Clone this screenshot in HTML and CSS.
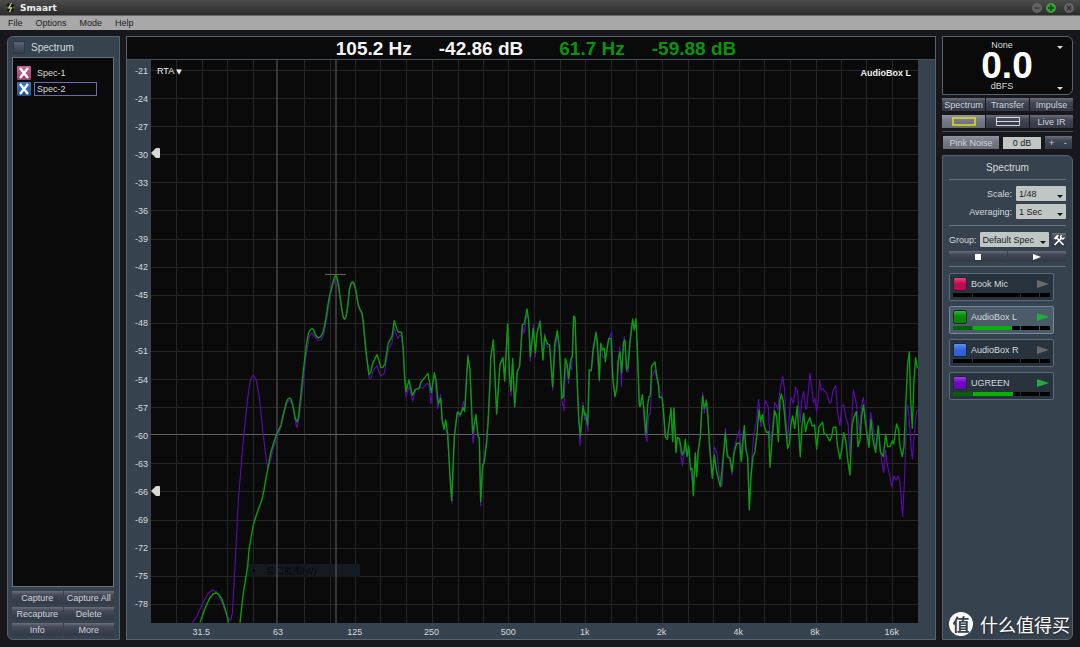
FILE: index.html
```html
<!DOCTYPE html>
<html lang="en">
<head>
<meta charset="utf-8">
<title>Smaart</title>
<link rel="stylesheet" href="styles.css">
</head>
<body>
<div class="app">
  <header class="titlebar">
    <svg class="logo" viewBox="0 0 12 12" aria-hidden="true"><circle cx="6" cy="6" r="5" fill="#111" stroke="#2b3a20"/><path d="M7 1 4 6.500h3L5 11" fill="none" stroke="#d8d8c8" stroke-width="1.300"/><path d="M1.500 5v2M3 4.500v3M9 4.500v3M10.500 5v2" stroke="#5d8a34" stroke-width=".8"/></svg>
    <h1 class="app-name">Smaart</h1>
    <div class="window-controls">
      <button class="win-btn" aria-label="Minimize"><svg viewBox="0 0 10 10"><circle cx="5" cy="5" r="5" fill="#636363"/><path d="M2.500 5h5" stroke="#2f2f2f" stroke-width="1.200"/></svg></button>
      <button class="win-btn" aria-label="Maximize"><svg viewBox="0 0 10 10"><circle cx="5" cy="5" r="5" fill="#35a32c"/><path d="M2 5h6M5 2v6" stroke="#0c3a0a" stroke-width="1.400"/></svg></button>
      <button class="win-btn win-close" aria-label="Close"><svg viewBox="0 0 10 10"><circle cx="5" cy="5" r="5" fill="#636363"/><path d="m3 3 4 4M7 3 3 7" stroke="#2a2a2a" stroke-width="1.300"/></svg></button>
    </div>
  </header>
  <nav class="menubar">
    <button class="menu-item">File</button>
    <button class="menu-item">Options</button>
    <button class="menu-item">Mode</button>
    <button class="menu-item">Help</button>
  </nav>

  <main class="workspace">
    <aside class="panel data-panel">
      <div class="data-head">
        <button class="fold" aria-label="Collapse"></button>
        <h2 class="panel-title">Spectrum</h2>
      </div>
      <ul class="captures">
        <li class="capture">
          <button class="swatch-x pink" aria-label="Hide Spec-1"><svg viewBox="0 0 14 14"><path d="m3 2 8 10M11 2 3 12" stroke="#fff" stroke-width="2.400"/></svg></button>
          <input class="capture-name" aria-label="First capture name" value="Spec-1">
        </li>
        <li class="capture">
          <button class="swatch-x blue" aria-label="Hide Spec-2"><svg viewBox="0 0 14 14"><path d="m3 2 8 10M11 2 3 12" stroke="#fff" stroke-width="2.400"/></svg></button>
          <input class="capture-name selected" aria-label="Second capture name" value="Spec-2">
        </li>
      </ul>
      <div class="data-actions">
        <button class="btn">Capture</button><button class="btn">Capture All</button>
        <button class="btn">Recapture</button><button class="btn">Delete</button>
        <button class="btn">Info</button><button class="btn">More</button>
      </div>
    </aside>

    <section class="graph">
      <div class="readout">
        <span>105.2 Hz</span><span class="gap-m">-42.86 dB</span><span class="locked gap-l">61.7 Hz</span><span class="locked gap-m">-59.88 dB</span>
      </div>
      <div class="axis-y">
        <span>-21</span><span>-24</span><span>-27</span><span>-30</span><span>-33</span><span>-36</span><span>-39</span><span>-42</span><span>-45</span><span>-48</span><span>-51</span><span>-54</span><span>-57</span><span>-60</span><span>-63</span><span>-66</span><span>-69</span><span>-72</span><span>-75</span><span>-78</span>
      </div>
      <div class="plot">
        <svg class="chart" viewBox="151 60 767 563" preserveAspectRatio="none" role="img" aria-label="RTA spectrum">
          <path class="grid" d="M151 70.500h767M151 98.500h767M151 126.500h767M151 154.500h767M151 182.500h767M151 210.500h767M151 239.500h767M151 267.500h767M151 295.500h767M151 323.500h767M151 351.500h767M151 379.500h767M151 407.500h767M151 463.500h767M151 491.500h767M151 520.500h767M151 548.500h767M151 576.500h767M151 604.500h767"/>
          <path class="grid" d="M176.500 60v563M202.500 60v563M227.500 60v563M253.500 60v563M304.500 60v563M330.500 60v563M355.500 60v563M380.500 60v563M406.500 60v563M432.500 60v563M458.500 60v563M483.500 60v563M508.500 60v563M534.500 60v563M560.500 60v563M585.500 60v563M611.500 60v563M636.500 60v563M662.500 60v563M688.500 60v563M713.500 60v563M739.500 60v563M764.500 60v563M790.500 60v563M816.500 60v563M841.500 60v563M866.500 60v563M892.500 60v563"/>
          <rect x="248" y="564" width="112" height="13" fill="#141b20"/>
          <text class="ghost" x="266" y="574">窗口截图(W)</text><circle cx="254" cy="570.500" r="1.500" fill="#06090b"/>
          <path class="cursor" d="M277 60v563M336 60v563M151 434.500h767M325 274.500h21"/>
          <g class="trace purple">
            <polyline transform="translate(180 260) scale(.3333)" points="37,1088 50,1070 68,1030 85,1000 98,990 110,997 125,1025 140,1065 152,1082 157,1060 165,920 175,720 190,540 203,415 211,360 219,345 228,358 238,410 248,510 260,610 265,625 272,600 280,565 290,535 303,502 312,462 320,432 328,420 337,432 345,480 351,503 357,475 367,395 377,295 388,230 396,218 404,230 413,241 424,240 431,225 440,180 450,110 458,80 467,58 475,80 483,130 490,172 495,178 502,150 508,92 514,72 518,68 525,82 535,140 546,165 553,230 560,300 568,355 573,355 580,330 591,318 602,348 613,340 625,270 636,248 643,205 653,235 660,225"/>
            <polyline transform="translate(400 290) scale(.3333)" points="0,135 5,140 10,190 18,320 27,290 38,333 47,300 60,290 68,295 80,280 87,285 93,342 100,270 104,260 113,357 122,313 127,390 135,415 143,440 150,560 156,640 163,440 172,370 181,380 190,335 195,355 200,250 204,193 210,240 219,460 228,380 234,440 238,450 242,648 248,530 258,460 264,400 270,280 272,208 280,153 290,370 300,225 309,205 314,270 323,105 328,250 333,317 338,210 344,350 352,245 359,228 367,110 372,130 381,70 386,95 391,213 400,105 406,200 411,130 420,90 429,205 434,130 441,170 449,172 458,300 464,200 472,130 478,180 486,330 492,362 496,240 499,220 506,280 510,220 515,240 521,80 525,85 530,250 536,390 540,467 549,338 554,390 557,375 564,425 568,245 574,245 588,123 598,275 602,165 608,200 616,205 626,150 635,125 640,270 645,320 651,290 659,170 664,290 669,170 673,140 680,245 685,245 690,165 698,95 703,120 708,90 713,200 718,345 720,350"/>
            <polyline transform="translate(640 290) scale(.3333)" points="0,350 8,335 15,430 21,455 26,375 31,370 36,260 44,240 50,265 60,305 66,310 71,360 76,440 82,448 85,425 93,358 98,450 102,352 108,485 112,442 118,455 127,528 136,470 140,500 146,475 152,535 160,605 166,487 170,545 175,480 181,440 188,308 193,370 199,328 204,380 212,500 217,555 223,470 232,495 238,560 246,590 251,500 256,415 262,490 270,508 276,555 282,480 290,445 299,417 304,500 309,430 313,420 318,480 323,505 328,650 335,510 342,430 350,390 356,328 363,410 370,385 376,332 385,352 390,455 397,420 404,338 409,345 414,360 420,300 428,258 434,300 438,390 443,455 452,320 460,340 467,292 472,300 478,370 481,398 485,330 491,304 497,357 500,357 510,250 515,290 520,338 525,325 530,365 535,330 539,270 543,300 548,296 560,310 569,340 574,335 578,305 587,287 593,370 600,407 605,350 611,343 617,380 624,400 630,500 635,400 640,300 648,335 655,390 659,430 664,350 670,323 677,380 683,435 687,450 692,367 700,410 707,480 713,420 718,440 722,490 731,548 737,480 743,530 750,560 755,590 762,558 769,570 775,558 780,580 788,680 794,560 800,360 804,345 808,390 813,470 817,507 824,420 828,375 833,358"/>
          </g>
          <g class="trace green">
            <polyline transform="translate(180 260) scale(.3333)" points="60,1088 75,1045 90,1013 99,1002 108,999 116,1003 125,1016 136,1048 146,1088"/>
            <polyline transform="translate(180 260) scale(.3333)" points="180,1088 190,1000 203,920 207,870 213,835 219,800 228,768 238,740 245,722 252,690 259,650 265,618 272,580 280,552 290,523 303,495 307,475 312,455 318,430 323,418 328,414 333,418 338,433 346,475 351,486 355,475 359,440 365,380 375,290 380,250 385,222 390,210 396,206 401,209 405,222 410,230 415,234 421,231 427,222 432,205 437,180 447,115 458,70 464,52 467,46 471,52 475,70 483,130 488,165 492,176 495,177 499,168 503,140 508,90 513,70 518,65 522,69 527,88 535,135 540,148 546,158 550,185 553,220 560,290 567,344 572,338 578,310 591,284 597,300 602,322 608,323 615,312 620,280 625,250 636,230 643,182 652,212 657,217 660,215"/>
            <polyline transform="translate(400 290) scale(.3333)" points="0,125 5,128 10,180 14,265 18,305 27,270 37,316 46,298 58,296 62,278 84,250 94,308 103,248 108,270 115,342 122,325 127,395 132,418 137,390 143,430 150,560 155,632 163,440 172,366 181,374 190,352 194,365 200,260 204,200 210,240 218,430 228,374 234,438 238,445 242,635 248,525 252,520 260,460 264,400 270,280 272,205 280,150 290,372 300,222 309,203 314,273 323,102 328,250 333,303 338,205 344,350 352,245 359,228 367,105 373,102 381,57 386,90 391,200 400,115 406,188 411,130 420,95 429,210 434,138 441,160 449,165 458,290 464,165 472,122 478,170 486,326 490,320 496,205 502,225 506,265 513,205 517,200 521,78 525,82 530,230 536,380 541,438 549,348 554,375 557,370 563,405 568,240 574,240 579,180 588,128 592,155 598,270 602,160 608,180 613,175 616,215 626,145 633,145 638,260 645,320 651,290 654,215 660,185 665,248 671,155 675,150 680,240 684,230 690,155 698,87 703,120 708,86 713,200 718,345 720,350"/>
            <polyline transform="translate(640 290) scale(.3333)" points="0,350 3,335 7,314 12,360 18,435 23,345 27,320 31,318 35,228 45,216 50,255 55,280 58,322 66,322 70,360 76,440 82,448 85,420 93,354 98,455 102,355 108,488 112,442 118,445 127,495 132,485 136,448 141,500 146,468 152,540 156,535 160,617 166,490 170,560 175,480 181,440 186,345 188,318 193,355 199,332 204,380 208,460 212,510 217,565 223,495 229,540 241,590 248,520 256,430 262,500 270,505 276,545 282,490 290,460 299,460 304,515 313,407 318,480 323,500 328,660 333,560 339,500 345,485 351,430 357,360 362,395 367,374 373,410 380,428 386,425 390,532 396,450 404,362 410,380 415,455 420,330 424,312 430,335 436,400 443,475 449,460 452,410 458,378 464,415 472,348 477,440 481,500 486,410 491,370 497,425 502,400 510,383 516,408 524,405 530,477 537,410 548,397 552,430 560,435 569,453 575,440 580,412 588,412 592,465 600,507 606,475 611,428 617,450 624,515 630,555 636,410 642,380 649,365 654,470 660,450 665,380 670,345 676,395 682,440 687,472 693,388 699,450 707,487 715,408 721,485 730,500 737,433 743,470 750,470 757,452 761,462 770,402 776,420 780,470 787,500 792,470 797,350 803,225 808,185 812,330 817,415 822,270 827,203 832,235"/>
          </g>
        </svg>
        <button class="plot-mode">RTA <span class="tri">▼</span></button>
        <span class="plot-source">AudioBox L</span>
        <button class="handle handle-high" aria-label="Upper threshold"><svg viewBox="0 0 10 10"><path d="M0 5 5 0h3q1 0 1 1v8q0 1-1 1H5z" fill="#d8d8d8"/></svg></button>
        <button class="handle handle-low" aria-label="Lower threshold"><svg viewBox="0 0 10 10"><path d="M0 5 5 0h3q1 0 1 1v8q0 1-1 1H5z" fill="#d8d8d8"/></svg></button>
      </div>
      <div class="axis-x">
        <span>31.5</span><span>63</span><span>125</span><span>250</span><span>500</span><span>1k</span><span>2k</span><span>4k</span><span>8k</span><span>16k</span>
      </div>
    </section>

    <aside class="side">
      <div class="meter">
        <button class="meter-label">None</button>
        <strong class="meter-value">0.0</strong>
        <button class="meter-label">dBFS</button>
        <i class="arrow arrow-top"></i><i class="arrow arrow-bottom"></i>
      </div>
      <div class="modes">
        <button class="btn">Spectrum</button><button class="btn">Transfer</button><button class="btn">Impulse</button>
      </div>
      <div class="modes views">
        <button class="btn active" aria-label="Single view"><svg class="view-icon" viewBox="0 0 24 9"><path d="M1 1h22v7H1z" fill="none" stroke="#e2de1c" stroke-width="1.500"/></svg></button>
        <button class="btn" aria-label="Split view"><svg class="view-icon" viewBox="0 0 24 9"><path d="M.5.500h23v8H.5zM.5 4.500h23" fill="none" stroke="#d5d9dc"/></svg></button>
        <button class="btn">Live IR</button>
      </div>
      <div class="generator">
        <button class="btn active noise">Pink Noise</button>
        <input class="level" aria-label="Generator level" value="0 dB">
        <div class="stepper"><button class="btn">+</button><button class="btn">-</button></div>
      </div>

      <div class="panel control">
        <h2 class="panel-title control-title">Spectrum</h2>
        <div class="settings">
          <label for="scale">Scale:</label>
          <span class="pick"><select id="scale"><option>1/48</option></select></span>
          <label for="avg">Averaging:</label>
          <span class="pick"><select id="avg"><option>1 Sec</option></select></span>
        </div>
        <div class="group">
          <div class="group-row">
            <label for="group">Group:</label>
            <span class="pick"><select id="group"><option>Default Spec</option></select></span>
            <button class="btn tools" aria-label="Group settings"><svg viewBox="0 0 12 12"><path d="m3 3 7.500 8M9 3.500l-7.500 7.500" stroke="#fff" stroke-width="1.700"/><path d="M.5 4.500 4 1l2 .5L3 5.500z" fill="#fff"/><path d="M9 1 7.500 2.500l.5 2 2 .5L11.500 3.500" fill="none" stroke="#fff" stroke-width="1.300"/></svg></button>
          </div>
          <div class="transport">
            <button class="btn" aria-label="Stop all"><svg viewBox="0 0 10 6"><path d="M2 0h6v6H2z" fill="#fff"/></svg></button>
            <button class="btn" aria-label="Run all"><svg viewBox="0 0 10 6"><path d="M1 0 9 3 1 6z" fill="#fff"/></svg></button>
          </div>
        </div>
        <ul class="inputs">
          <li class="input-card"><button class="swatch red" aria-label="Book Mic color"></button><span class="input-name">Book Mic</span><button class="run" aria-label="Run Book Mic"><svg viewBox="0 0 12 8"><path d="M0 0 12 4 0 8z" fill="#6c6968"/></svg></button><div class="level-bar"><i></i><i></i><i></i><i></i></div></li>
          <li class="input-card current"><button class="swatch grn" aria-label="AudioBox L color"></button><span class="input-name">AudioBox L</span><button class="run" aria-label="Stop AudioBox L"><svg viewBox="0 0 12 8"><path d="M0 0 12 4 0 8z" fill="#1fae3c"/></svg></button><div class="level-bar"><i class="low"></i><i><b class="fill" style="width:83%"></b></i><i></i><i></i></div></li>
          <li class="input-card"><button class="swatch blu" aria-label="AudioBox R color"></button><span class="input-name">AudioBox R</span><button class="run" aria-label="Run AudioBox R"><svg viewBox="0 0 12 8"><path d="M0 0 12 4 0 8z" fill="#6c6968"/></svg></button><div class="level-bar"><i></i><i></i><i></i><i></i></div></li>
          <li class="input-card"><button class="swatch pur" aria-label="UGREEN color"></button><span class="input-name">UGREEN</span><button class="run" aria-label="Stop UGREEN"><svg viewBox="0 0 12 8"><path d="M0 0 12 4 0 8z" fill="#1fae3c"/></svg></button><div class="level-bar"><i class="low"></i><i><b class="fill" style="width:86%"></b></i><i></i><i></i></div></li>
        </ul>
      </div>
    </aside>
  </main>
  <div class="watermark"><span class="badge">值</span>什么值得买</div>
</div>
</body>
</html>
```
FILE: styles.css
```css
* { box-sizing: border-box; }
body {
  margin: 0;
  background: #17171c;
  color: #d5dade;
  font: 9px/10px "Liberation Sans", "Noto Sans CJK SC", sans-serif;
}
h1, h2, ul { margin: 0; padding: 0; list-style: none; }
button, input, select {
  margin: 0;
  padding: 0;
  border: 0;
  border-radius: 0;
  background: none;
  color: inherit;
  font: inherit;
}
svg { display: block; }

.app { position: relative; display: flex; flex-direction: column; min-height: 100vh; }

.titlebar {
  display: flex;
  align-items: center;
  gap: 4px;
  height: 16px;
  padding: 0 6px 0 5px;
  background: linear-gradient(#4c4c4c, #2b2b2b);
  border-bottom: 1px solid #6c6c6c;
}
.logo { width: 11px; height: 11px; }
.app-name { flex: 1; color: #eee; font: bold 9px/12px "DejaVu Sans", sans-serif; }
.window-controls { display: flex; gap: 4px; }
.win-btn { width: 10px; height: 10px; }
.win-close { margin-left: 4px; }

.menubar {
  display: flex;
  gap: 13px;
  height: 14px;
  padding-left: 8px;
  background: #a8a8a8;
  color: #1c1c1c;
}
.menu-item { line-height: 12px; }

.workspace {
  flex: 1;
  display: grid;
  grid-template-columns: 113px minmax(0, 1fr) 131px;
  gap: 6px;
  padding: 6px 7px 7px;
}
.panel { background: #36424e; border: 1px solid #536472; }
.panel-title { font-size: 10px; font-weight: normal; line-height: 12px; }

.btn {
  display: flex;
  align-items: center;
  justify-content: center;
  background: linear-gradient(#6b6f7c, #454a58 30%, #3c4150 55%, #343948);
  color: #d0d4da;
  white-space: nowrap;
  line-height: 10px;
}
.btn.active { background: linear-gradient(#9093a0, #777a86 40%, #686c79); }

/* captured data list */
.data-panel {
  display: flex;
  flex-direction: column;
  padding: 2px 5px 3px 4px;
  border-radius: 6px 0 0 6px;
}
.data-head { display: flex; align-items: center; gap: 6px; height: 18px; padding: 0 0 1px 1px; }
.fold { width: 12px; height: 13px; background: linear-gradient(#5a6274, #363d4c); border: 1px solid #2f3743; }
.captures {
  flex: 1;
  display: flex;
  flex-direction: column;
  gap: 2px;
  padding: 8px 16px 0 4px;
  background: #0a0a0a;
  border: 1px solid #66747f;
}
.capture { display: flex; align-items: center; gap: 3px; }
.swatch-x { flex: none; width: 14px; height: 14px; border-radius: 1px; }
.pink { background: linear-gradient(#c8649c, #96416e); }
.blue { background: linear-gradient(#3f7cba, #235088); }
.capture-name { flex: 1; min-width: 0; height: 14px; padding-left: 2px; border: 1px solid transparent; }
.selected { border-color: #6d69b8; }
.data-actions { display: grid; grid-template-columns: 1fr 1fr; gap: 3px 1px; padding-top: 4px; }
.data-actions .btn { height: 13px; }

/* graph */
.graph {
  display: grid;
  grid-template-columns: 24px minmax(0, 1fr) 17px;
  grid-template-rows: 23px minmax(0, 1fr) 16px;
  background: #36424e;
  border: 1px solid #536472;
}
.readout {
  grid-column: 1 / -1;
  display: flex;
  justify-content: center;
  padding-left: 10px;
  background: #0a0a0a;
  border-bottom: 1px solid #46525e;
  color: #f4f4f4;
  font-size: 19px;
  font-weight: bold;
  line-height: 24px;
  white-space: nowrap;
}
.gap-m { margin-left: 27px; }
.gap-l { margin-left: 36px; }
.locked { color: #0a940a; }
.axis-y {
  display: flex;
  flex-direction: column;
  justify-content: space-between;
  align-items: flex-end;
  padding: 6px 3px 14px 0;
}
.plot { position: relative; background: #0a0a0a; }
.chart { position: absolute; inset: 0; width: 100%; height: 100%; }
.chart path, .chart polyline { fill: none; vector-effect: non-scaling-stroke; }
.grid { stroke: #262626; }
.cursor { stroke: #626262; }
.trace { stroke-linejoin: round; }
.purple { stroke: #6008b4; stroke-width: 1.1px; }
.green { stroke: #06a006; stroke-width: 1.4px; }
.ghost { fill: #06090b; font-size: 9px; }
.plot-mode { position: absolute; left: 6px; top: 6px; color: #eee; }
.tri { font: 7px/10px "DejaVu Sans", sans-serif; }
.plot-source { position: absolute; right: 7px; top: 8px; color: #eee; font-weight: bold; }
.handle { position: absolute; left: 0; width: 10px; height: 10px; }
.handle-high { top: 15.7%; }
.handle-low { top: 75.7%; }
.axis-x {
  grid-column: 1 / -1;
  display: grid;
  grid-template-columns: repeat(10, 1fr);
  padding: 4px 5px 0 36px;
  text-align: center;
}

/* right column */
.side { display: flex; flex-direction: column; }
.meter {
  position: relative;
  display: flex;
  flex-direction: column;
  align-items: center;
  height: 59px;
  padding: 3px 11px 0 0;
  background: #0a0a0a;
  border: 1px solid #536472;
  border-radius: 0 6px 6px 0;
}
.meter-value { padding-left: 10px; color: #fff; font-size: 37px; line-height: 31px; }
.arrow {
  position: absolute;
  right: 9px;
  border: 3px solid transparent;
  border-top-color: #ddd;
  border-bottom: 0;
}
.arrow-top { top: 9px; }
.arrow-bottom { bottom: 4px; }
.modes { display: grid; grid-template-columns: repeat(3, 1fr); gap: 1px; margin-top: 3px; }
.modes .btn { height: 13px; }
.views { margin-top: 4px; padding-bottom: 3px; border-bottom: 1px solid #46515d; }
.view-icon { width: 24px; height: 9px; }
.generator { display: flex; align-items: center; margin: 4px 1px 6px; }
.noise { width: 56px; height: 13px; }
.level {
  width: 38px;
  height: 12px;
  margin: 0 4px;
  background: #bfc6c4;
  color: #222;
  text-align: center;
}
.stepper { flex: 1; display: grid; grid-template-columns: 1fr 1fr; }
.stepper .btn { height: 13px; }

.control { flex: 1; padding: 6px; border-radius: 0 6px 6px 0; }
.control-title { padding-bottom: 5px; border-bottom: 1px solid #66747f; text-align: center; }
.settings {
  display: grid;
  grid-template-columns: 1fr 50px;
  gap: 3px 4px;
  align-items: center;
  padding: 6px 0;
  border-bottom: 1px solid #66747f;
  text-align: right;
}
.pick { position: relative; display: flex; flex: 1; }
.pick::after {
  content: "";
  position: absolute;
  right: 3px;
  bottom: 3px;
  border: 3px solid transparent;
  border-top-color: #111;
  border-bottom: 0;
}
.pick select {
  width: 100%;
  height: 15px;
  padding-left: 3px;
  border-radius: 1px;
  background: #bfc6c4;
  color: #1c1c1c;
  appearance: none;
}
.group { padding: 6px 0 4px; border-bottom: 1px solid #66747f; }
.group-row { display: flex; align-items: center; gap: 3px; }
.tools { width: 14px; height: 14px; }
.tools svg { width: 12px; height: 12px; }
.transport { display: grid; grid-template-columns: 1fr 1fr; gap: 1px; margin-top: 4px; }
.transport .btn { height: 11px; }
.transport svg { width: 10px; height: 6px; }
.inputs { display: flex; flex-direction: column; gap: 5px; padding-top: 6px; margin-right: 12px; }
.input-card {
  display: grid;
  grid-template-columns: 14px 1fr 13px;
  column-gap: 4px;
  align-items: center;
  height: 28px;
  padding: 2px 3px;
  background: #28333e;
  border: 1px solid #5b6b80;
  border-radius: 2px;
}
.current { background: #4b5b69; border-color: #7387a3; }
.swatch { width: 14px; height: 14px; border-radius: 2px; border: 1px solid #1f2832; }
.red { background: linear-gradient(#e8457d, #c50a4f 45%, #bb0a4b); }
.grn { background: linear-gradient(#3caf3c, #078a07 45%, #078407); }
.blu { background: linear-gradient(#6590f2, #3565e0 45%, #2f5cd4); }
.pur { background: linear-gradient(#9a45e0, #7009c8 45%, #6608ba); }
.run svg { width: 12px; height: 8px; }
.input-name { white-space: nowrap; }
.level-bar {
  grid-column: 1 / -1;
  display: grid;
  grid-template-columns: 20fr 48fr 19fr 10fr;
  gap: 1px;
  height: 4px;
}
.level-bar i { background: #000; }
.level-bar .low { background: #066006; }
.fill { display: block; height: 100%; background: #08b008; }

.watermark {
  position: absolute;
  right: 10px;
  bottom: 10px;
  display: flex;
  align-items: center;
  gap: 7px;
  color: #fff;
  font: 18px/26px "Noto Sans CJK SC", sans-serif;
  text-shadow: 1px 1px 2px #222;
}
.badge {
  width: 24px;
  height: 24px;
  border-radius: 50%;
  background: #fff;
  color: #36424e;
  font-size: 17px;
  font-weight: bold;
  line-height: 23px;
  text-align: center;
  text-shadow: none;
}
```
